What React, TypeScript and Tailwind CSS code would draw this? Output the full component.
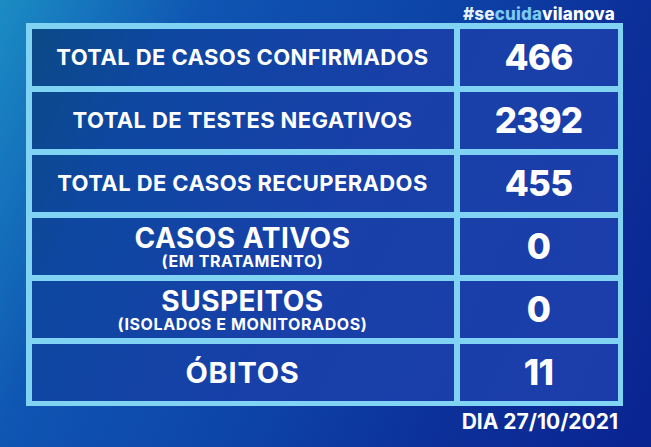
const ROWS = [
  { label: "TOTAL DE CASOS CONFIRMADOS", value: "466" },
  { label: "TOTAL DE TESTES NEGATIVOS", value: "2392" },
  { label: "TOTAL DE CASOS RECUPERADOS", value: "455" },
  { label: "CASOS ATIVOS", sub: "(EM TRATAMENTO)", value: "0" },
  { label: "SUSPEITOS", sub: "(ISOLADOS E MONITORADOS)", value: "0" },
  { label: "ÓBITOS", value: "11", big: true },
];

const cell =
  "bg-fixed bg-[linear-gradient(115deg,#0a4a7e_0%,#0e47a2_22%,#1840a8_50%,#1c3dab_100%)] flex flex-col items-center justify-center text-white";

export default function App() {
  return (
    <div className="relative h-[447px] w-[651px] overflow-hidden bg-[linear-gradient(115deg,#1b8cc4_0%,#0f55b2_24%,#0d45a8_50%,#0c2f98_76%,#0a2490_100%)] font-['Inter','Liberation_Sans',sans-serif]">
      <div className="pl-[26px] pt-[5px]">
        <div className="w-[597px] pr-[8px] text-right text-[17px] font-extrabold leading-[18px] tracking-[0.2px]">
          <span className="text-[#e4f1fb]">#se</span>
          <span className="text-[#7cc9f1]">cuida</span>
          <span className="text-white">vilanova</span>
        </div>
        <div className="grid w-[597px] grid-cols-[422px_158px] auto-rows-[57px] gap-x-[6px] gap-y-[6px] bg-[#80d3f3] p-[5.5px]">
          {ROWS.map((r) => (
            <div key={r.label} className="contents">
              <div className={cell}>
                {r.sub ? (
                  <>
                    <span className="text-[28px] font-bold leading-[29px] tracking-[0.5px]">{r.label}</span>
                    <span className="text-[16px] font-bold leading-[16px] tracking-[0.6px]">{r.sub}</span>
                  </>
                ) : (
                  <span
                    className={
                      r.big
                        ? "text-[29px] font-bold leading-none tracking-[0.8px]"
                        : "text-[22px] font-bold leading-none tracking-[0.4px]"
                    }
                  >
                    {r.label}
                  </span>
                )}
              </div>
              <div className={cell}>
                <span className="text-[35px] font-extrabold leading-none tracking-[-0.8px]">{r.value}</span>
              </div>
            </div>
          ))}
        </div>
        <div className="w-[597px] pr-[5px] pt-[4px] text-right text-[21px] font-bold leading-[24px] text-white">
          DIA 27/10/2021
        </div>
      </div>
    </div>
  );
}
